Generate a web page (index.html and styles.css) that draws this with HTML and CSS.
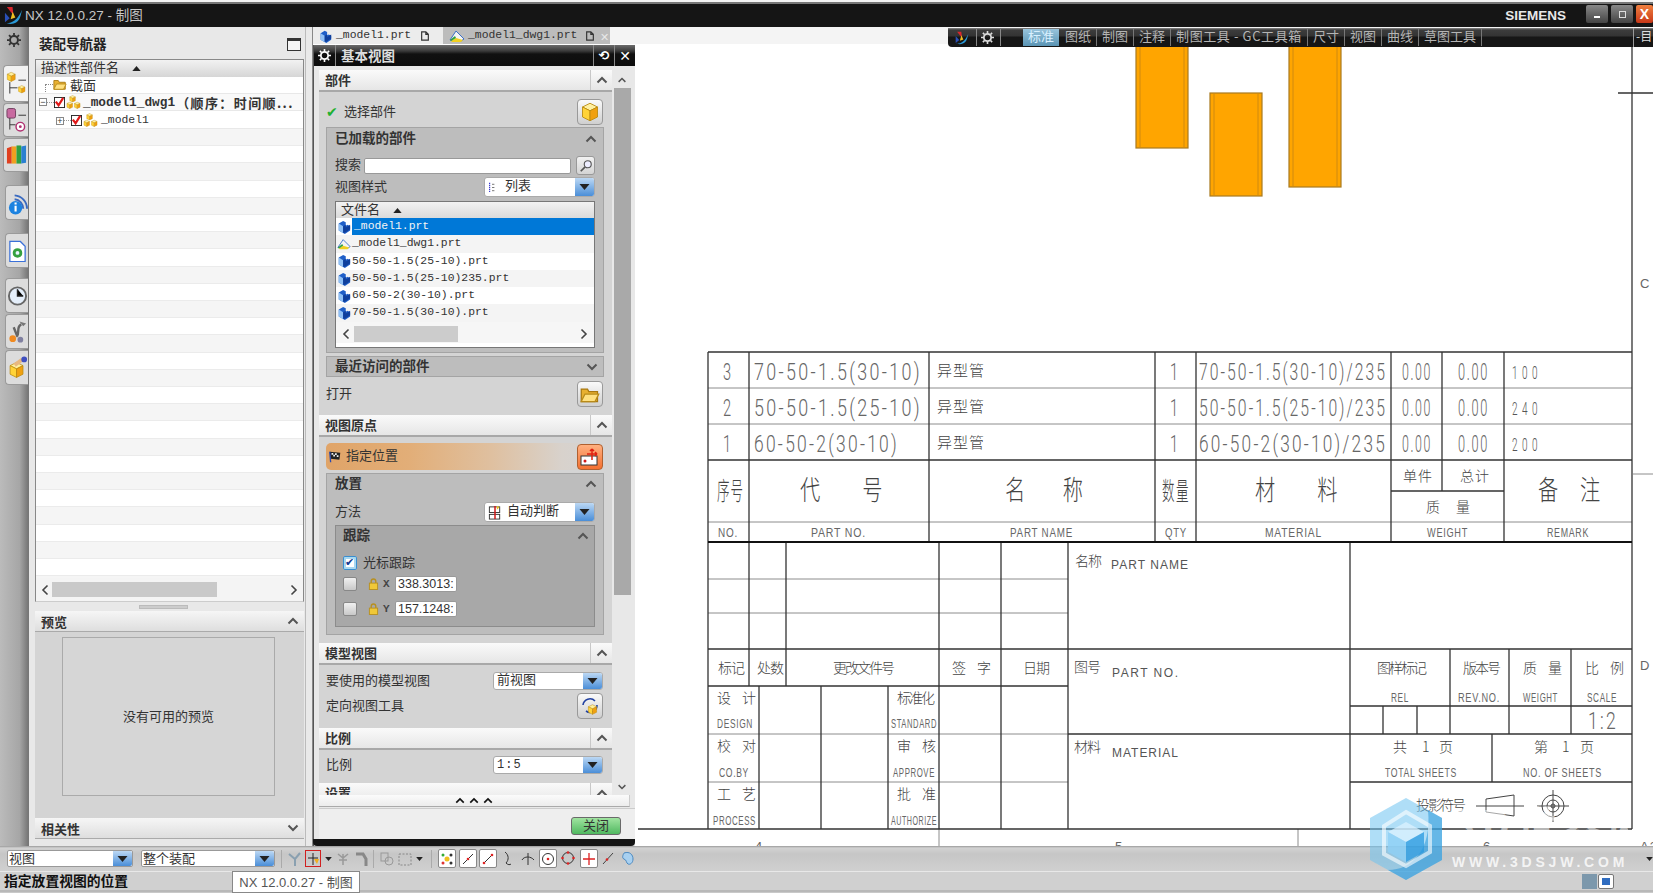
FILE: index.html
```html
<!DOCTYPE html>
<html lang="zh-CN">
<head>
<meta charset="utf-8">
<title>NX 12.0.0.27 - 制图</title>
<link rel="stylesheet" href="styles.css">
</head>
<body>
<svg class="defs" width="0" height="0" aria-hidden="true">
  <symbol id="part" viewBox="0 0 16 16"><path fill="#1f5fc8" d="M2 4l5-3 3 1.500v4l2-1 3 1.500v5l-6 4-7-4z"/><path fill="#8fc0f5" d="M2 4l5 3v8l-5-3z"/><path fill="#0f3f9c" d="M7 7l3-1.500v3l5-3v5l-6 4H7z"/></symbol>
  <symbol id="cube" viewBox="0 0 16 16"><path fill="#fff0a0" stroke="#b98a10" stroke-width=".7" d="M8 1l6 3-6 3-6-3z"/><path fill="#ffd338" stroke="#b98a10" stroke-width=".7" d="M2 4l6 3v8l-6-3z"/><path fill="#f0a010" stroke="#b98a10" stroke-width=".7" d="M14 4l-6 3v8l6-3z"/></symbol>
  <symbol id="asm" viewBox="0 0 16 16"><use href="#cube" x="3" y="0" width="8" height="8"/><use href="#cube" x="0" y="7" width="8" height="8"/><use href="#cube" x="8" y="7" width="8" height="8"/></symbol>
  <symbol id="folder" viewBox="0 0 16 14"><path fill="#e8b030" stroke="#a87810" d="M1 3h5l1 2h7v8H1z"/><path fill="#ffe080" stroke="#b88a18" d="M1 13l3-6h11l-3 6z"/></symbol>
  <symbol id="chk" viewBox="0 0 12 12"><rect x=".5" y=".5" width="11" height="11" fill="#fff" stroke="#222"/><path fill="none" stroke="#e01818" stroke-width="2.400" d="M2 5l3 4 5-8"/></symbol>
  <symbol id="up" viewBox="0 0 12 8"><path fill="none" stroke="currentColor" stroke-width="2" d="M1.500 6.500L6 2l4.500 4.500"/></symbol>
  <symbol id="down" viewBox="0 0 12 8"><path fill="none" stroke="currentColor" stroke-width="2" d="M1.500 1.500L6 6l4.500-4.500"/></symbol>
  <symbol id="tri" viewBox="0 0 10 6"><path fill="#222" d="M5 0l5 6H0z"/></symbol>
  <symbol id="left" viewBox="0 0 8 12"><path fill="none" stroke="#444" stroke-width="1.600" d="M6.500 1.500L2 6l4.500 4.500"/></symbol>
  <symbol id="right" viewBox="0 0 8 12"><path fill="none" stroke="#444" stroke-width="1.600" d="M1.500 1.500L6 6l-4.500 4.500"/></symbol>
  <symbol id="gear" viewBox="0 0 16 16"><circle cx="8" cy="8" r="4.500" fill="none" stroke="currentColor" stroke-width="2.200"/><path stroke="currentColor" stroke-width="2" d="M8 0v3M8 13v3M0 8h3M13 8h3M2.300 2.300l2 2M11.700 11.700l2 2M13.700 2.300l-2 2M4.300 11.700l-2 2"/></symbol>
  <symbol id="draw" viewBox="0 0 16 16"><path fill="#f4f4f4" stroke="#3a6fc8" d="M1 12l6-9 8 8-3 2z"/><path fill="#f0d020" d="M2 13l5-3 7 2-2 2H3z"/><path fill="#30a040" d="M1 12l5-4 1 2-5 3z"/></symbol>
  <symbol id="doc" viewBox="0 0 12 12"><path fill="none" stroke="#333" stroke-width="1.400" d="M2 1h5l3 3v7H2zM7 1v3h3"/></symbol>
  <symbol id="logo" viewBox="0 0 20 20"><path fill="#d8262c" d="M3 1l6 0 1 9z"/><path fill="#f0c020" d="M9 6l3 6-5 2z"/><path fill="#2a9ad8" d="M1 18c6 1 13-2 18-14-2 8-2 14-12 15z"/><path fill="#2a50b8" d="M1 7l5 6-5 4z"/></symbol>
  <symbol id="flag" viewBox="0 0 16 14"><path fill="#222" d="M2 1l12 1-1 8-10-1z"/><path fill="#eee" d="M4 2.500h2v2H4zM8 2.800h2v2H8zM6 4.500h2v2H6zM10 5h2v2h-2z"/><path stroke="#2a4ab0" stroke-width="1.500" d="M2 1l1 12"/></symbol>
  <symbol id="lock" viewBox="0 0 12 14"><path fill="none" stroke="#b89020" stroke-width="1.500" d="M3.500 6V4a2.500 2.500 0 015 0v2"/><rect x="1.500" y="6" width="9" height="7" fill="#f0c838" stroke="#b89020"/></symbol>
  <symbol id="mag" viewBox="0 0 16 16"><circle cx="10" cy="6" r="4" fill="#eef" stroke="#555" stroke-width="1.300"/><path stroke="#555" stroke-width="2" d="M7 9l-5 5"/></symbol>
  <symbol id="listi" viewBox="0 0 10 14"><path stroke="#3a3ad0" stroke-width="1.500" stroke-dasharray="1.500 1" d="M2 1v12"/><path stroke="#555" d="M5 3h3M5 7h3M5 11h3"/></symbol>
  <symbol id="auto" viewBox="0 0 14 16"><rect x="1" y="2" width="11" height="6" fill="#fff" stroke="#333"/><rect x="1" y="10" width="11" height="5" fill="#fff" stroke="#333"/><path stroke="#d01818" stroke-width="1.600" d="M7 1v14"/><path fill="#e8c020" d="M9 1l3 1-3 3z"/></symbol>
</svg>

<div class="app">
  <header class="titlebar">
    <svg class="logo"><use href="#logo"/></svg>
    <span class="app-name">NX 12.0.0.27 - 制图</span>
    <span class="brand">SIEMENS</span>
    <div class="winbtns">
      <span class="winbtn"><i class="glyph-min"></i></span>
      <span class="winbtn"><i class="glyph-max"></i></span>
      <span class="winbtn winclose">X</span>
    </div>
  </header>

  <div class="workspace">
    <aside class="rail">
      <svg class="rail-gear"><use href="#gear"/></svg>
      <div class="rail-group rail-first">
        <div class="rtab rtab-on"><svg class="ri" viewBox="0 0 22 26"><use href="#cube" x="0" y="0" width="11" height="11"/><use href="#cube" x="12" y="14" width="9" height="9"/><path fill="none" stroke="#333" d="M4 11v12M4 17h8M13 9h8"/></svg></div>
        <div class="rtab"><svg class="ri" viewBox="0 0 22 26"><rect x="1" y="1" width="9" height="10" rx="2" fill="#c86aa0" stroke="#704060"/><circle cx="15" cy="20" r="4.500" fill="#fff" stroke="#b03070" stroke-width="1.500"/><circle cx="15" cy="20" r="1.500" fill="#b03070"/><path fill="none" stroke="#333" d="M4 11v12M4 18h6M13 8h8"/></svg></div>
        <div class="rtab"><svg class="ri" viewBox="0 0 22 26"><path fill="#e04020" d="M1 6l5-2v18H1z"/><path fill="#f0a020" d="M6 4h5v18H6z"/><path fill="#30a040" d="M11 3h5v19h-5z"/><path fill="#2a80d0" d="M16 4l5-1v18l-5 1z"/></svg></div>
      </div>
      <div class="rail-group">
        <div class="rtab"><svg class="ri" viewBox="0 0 22 26"><path fill="none" stroke="#3a6ac0" stroke-width="2" d="M8 5a14 14 0 0113 14M8 9a10 10 0 019 10"/><circle cx="9" cy="18" r="7" fill="#1c82e0"/><path stroke="#fff" stroke-width="2.200" d="M9 16v6M9 12.500v2"/></svg></div>
      </div>
      <div class="rail-group">
        <div class="rtab"><svg class="ri" viewBox="0 0 22 26"><path fill="#fff" stroke="#3a70d8" stroke-width="1.300" d="M3 3h11l5 5v16H3z"/><circle cx="11" cy="15" r="5" fill="#35a040"/><circle cx="11" cy="15" r="2" fill="#eaf4ff"/></svg></div>
      </div>
      <div class="rail-group rail-last">
        <div class="rtab"><svg class="ri" viewBox="0 0 22 26"><circle cx="11" cy="13" r="9" fill="#e4eefa" stroke="#666" stroke-width="2"/><path stroke="#222" stroke-width="1.500" d="M11 6v7h6"/></svg></div>
        <div class="rtab"><svg class="ri" viewBox="0 0 22 26"><path fill="none" stroke="#666" stroke-width="2.500" d="M15 5c-6 3-1 9-5 13M7 8l4 10"/><path fill="#777" d="M13 2l7 2-3 3z"/><circle cx="6" cy="20" r="3.500" fill="#f08a20"/><circle cx="14" cy="21" r="3" fill="#8080a0"/></svg></div>
        <div class="rtab"><svg class="ri" viewBox="0 0 22 26"><use href="#cube" x="1" y="6" width="18" height="18"/><path stroke="#e8b880" stroke-width="4" d="M8 10l8-6"/><circle cx="18" cy="4" r="3" fill="#4050c0"/></svg></div>
      </div>
    </aside>

    <section class="nav">
      <div class="nav-title"><strong>装配导航器</strong><span class="maxbox"></span></div>
      <div class="tree">
        <div class="tree-head"><span class="lbl">描述性部件名</span><svg class="sort"><use href="#tri"/></svg></div>
        <div class="tree-row tree-sec"><i class="twig"></i><svg class="i14"><use href="#folder"/></svg><span class="cn">截面</span></div>
        <div class="tree-row tree-root"><i class="exp">−</i><i class="twig-s"></i><svg class="i11"><use href="#chk"/></svg><svg class="i15"><use href="#asm"/></svg><b class="mono-b">_model1_dwg1</b><b class="cn-b">（顺序：时间顺...</b></div>
        <div class="tree-row tree-sub"><i class="exp">+</i><i class="twig-s"></i><svg class="i11"><use href="#chk"/></svg><svg class="i15"><use href="#asm"/></svg><span class="mono">_model1</span></div>
        <div class="tree-fill"></div>
        <div class="hscroll"><svg class="sarrow"><use href="#left"/></svg><i class="hthumb"></i><svg class="sarrow sarrow-end"><use href="#right"/></svg></div>
      </div>
      <div class="sash"><i></i></div>
      <div class="nav-sec">预览<svg class="chev"><use href="#up"/></svg></div>
      <div class="preview"><div class="preview-box">没有可用的预览</div></div>
      <div class="nav-sec">相关性<svg class="chev"><use href="#down"/></svg></div>
    </section>
    <div class="splitter"></div>

    <div class="right">
      <div class="top-row">
        <div class="doc-tab"><svg class="i13"><use href="#part"/></svg><span class="mono">_model1.prt</span><svg class="i10"><use href="#doc"/></svg></div>
        <div class="doc-tab doc-tab-on"><svg class="i16"><use href="#draw"/></svg><span class="mono">_model1_dwg1.prt</span><svg class="i10"><use href="#doc"/></svg><span class="tab-x">✕</span></div>
        <div class="top-fill"></div>
        <nav class="ribbon">
          <svg class="ribbon-logo"><use href="#logo"/></svg>
          <span class="ribbon-sep"></span>
          <svg class="ribbon-gear"><use href="#gear"/></svg>
          <span class="ribbon-sep ribbon-sep-g"></span>
          <span class="rb rb-on">标准</span><span class="rb">图纸</span><span class="rb">制图</span><span class="rb">注释</span><span class="rb rb-wide">制图工具 - GC工具箱</span><span class="rb">尺寸</span><span class="rb">视图</span><span class="rb">曲线</span><span class="rb">草图工具</span>
          <span class="rb-menu">-目</span>
        </nav>
      </div>

      <div class="stage">
        <div class="dialog">
          <div class="dlg-title">
            <svg class="dlg-gear"><use href="#gear"/></svg>
            <span class="dlg-name">基本视图</span>
            <span class="dlg-act">⟲</span>
            <span class="dlg-act dlg-x">✕</span>
          </div>
          <div class="dlg-main">
            <div class="dlg-scrollarea">
              <div class="sec-head"><span>部件</span><span class="sec-chev"><svg class="chev"><use href="#up"/></svg></span></div>
              <div class="sec-body sb-part">
                <div class="row-pick">
                  <span class="okmark">✔</span><span class="lbl">选择部件</span>
                  <span class="ibtn"><svg class="i20"><use href="#cube"/></svg></span>
                </div>
                <div class="group grp-loaded">
                  <div class="grp-head"><strong>已加载的部件</strong><svg class="chev"><use href="#up"/></svg></div>
                  <div class="row-search"><span class="lb-search lbl">搜索</span><span class="input input-search"></span><span class="sbtn"><svg class="i14"><use href="#mag"/></svg></span></div>
                  <div class="row-combo"><span class="lbl">视图样式</span>
                    <span class="combo combo-s"><svg class="i-list"><use href="#listi"/></svg><span class="combo-t">列表</span><i class="combo-btn"><svg class="ctri"><use href="#tri"/></svg></i></span>
                  </div>
                  <div class="list">
                    <div class="list-head"><span class="lbl">文件名</span><svg class="sort"><use href="#tri"/></svg></div>
                    <div class="list-row"><svg class="i14"><use href="#part"/></svg><span class="mono mono-sel">_model1.prt</span></div>
                    <div class="list-row"><svg class="i14"><use href="#draw"/></svg><span class="mono">_model1_dwg1.prt</span></div>
                    <div class="list-row"><svg class="i14"><use href="#part"/></svg><span class="mono">50-50-1.5(25-10).prt</span></div>
                    <div class="list-row"><svg class="i14"><use href="#part"/></svg><span class="mono">50-50-1.5(25-10)235.prt</span></div>
                    <div class="list-row"><svg class="i14"><use href="#part"/></svg><span class="mono">60-50-2(30-10).prt</span></div>
                    <div class="list-row"><svg class="i14"><use href="#part"/></svg><span class="mono">70-50-1.5(30-10).prt</span></div>
                    <div class="list-scroll"><svg class="sarrow"><use href="#left"/></svg><i class="lthumb"></i><svg class="sarrow sarrow-end"><use href="#right"/></svg></div>
                  </div>
                </div>
                <div class="group grp-recent"><strong>最近访问的部件</strong><svg class="chev"><use href="#down"/></svg></div>
                <div class="row-open"><span class="lbl">打开</span><span class="ibtn"><svg class="i20"><use href="#folder"/></svg></span></div>
              </div>

              <div class="sec-head"><span>视图原点</span><span class="sec-chev"><svg class="chev"><use href="#up"/></svg></span></div>
              <div class="sec-body sb-origin">
                <div class="row-loc"><svg class="i14"><use href="#flag"/></svg><span class="lbl">指定位置</span>
                  <span class="ibtn ibtn-o"><svg class="i20" viewBox="0 0 20 20"><rect x="1" y="9" width="16" height="9" fill="#fff" stroke="#333"/><circle cx="5" cy="14" r="1.500" fill="#d01818"/><path fill="none" stroke="#e02010" stroke-width="1.500" d="M12 2v11M7 7h10M12 2l-2 2M12 2l2 2M17 7l-2-2M17 7l-2 2"/></svg></span>
                </div>
                <div class="group grp-place">
                  <div class="grp-head grp-head-s"><strong>放置</strong><svg class="chev"><use href="#up"/></svg></div>
                  <div class="row-combo row-method"><span class="lbl">方法</span>
                    <span class="combo combo-s"><svg class="i-auto"><use href="#auto"/></svg><span class="combo-t">自动判断</span><i class="combo-btn"><svg class="ctri"><use href="#tri"/></svg></i></span>
                  </div>
                  <div class="grp-track">
                    <div class="grp-head grp-head-s grp-head-t"><strong>跟踪</strong><svg class="chev"><use href="#up"/></svg></div>
                    <div class="track-row tr-cursor"><span class="cb cb-on"></span><span class="lbl">光标跟踪</span></div>
                    <div class="track-row tr-x"><span class="cb"></span><svg class="i-lock"><use href="#lock"/></svg><b class="axis">X</b><span class="coord">338.3013:</span></div>
                    <div class="track-row tr-y"><span class="cb"></span><svg class="i-lock"><use href="#lock"/></svg><b class="axis">Y</b><span class="coord">157.1248:</span></div>
                  </div>
                </div>
              </div>

              <div class="sec-head"><span>模型视图</span><span class="sec-chev"><svg class="chev"><use href="#up"/></svg></span></div>
              <div class="sec-body sb-model">
                <div class="row-wide"><span class="lbl">要使用的模型视图</span>
                  <span class="combo combo-w"><span class="combo-t">前视图</span><i class="combo-btn"><svg class="ctri"><use href="#tri"/></svg></i></span>
                </div>
                <div class="row-orient"><span class="lbl">定向视图工具</span>
                  <span class="ibtn"><svg class="i20" viewBox="0 0 20 20"><path fill="none" stroke="#2040a0" stroke-width="1.600" d="M3 9a7 7 0 0112-4M17 9a7 7 0 01-11 6"/><use href="#cube" x="7" y="8" width="11" height="11"/></svg></span>
                </div>
              </div>

              <div class="sec-head"><span>比例</span><span class="sec-chev"><svg class="chev"><use href="#up"/></svg></span></div>
              <div class="sec-body sb-scale">
                <div class="row-wide"><span class="lbl">比例</span>
                  <span class="combo combo-w"><span class="combo-t mono-l">1:5</span><i class="combo-btn"><svg class="ctri"><use href="#tri"/></svg></i></span>
                </div>
              </div>

              <div class="sec-head sec-cut"><span>设置</span><span class="sec-chev"><svg class="chev"><use href="#up"/></svg></span></div>
            </div>
            <div class="dlg-vscroll">
              <svg class="vs-up"><use href="#up"/></svg>
              <i class="vs-thumb"></i>
              <svg class="vs-down"><use href="#down"/></svg>
            </div>
          </div>
          <div class="more-bar"><svg class="chev-b"><use href="#up"/></svg><svg class="chev-b"><use href="#up"/></svg><svg class="chev-b"><use href="#up"/></svg></div>
          <div class="dlg-foot"><span class="btn-close"><span class="lbl">关闭</span></span></div>
          <div class="dlg-bottom"></div>
        </div>

        <svg class="sheet" viewBox="638 44 1015 802" width="1015" height="802">
          <g class="solid">
            <rect x="1136" y="40" width="52" height="108"/>
            <rect x="1210" y="93" width="52" height="103"/>
            <rect x="1289" y="40" width="52" height="147"/>
          </g>
          <path class="inner" d="M1140 44V148M1184 44V148M1214 93V196M1258 93V196M1293 44V187M1337 44V187"/>

          <path class="thin" d="M708 388H1632M708 424H1632M708 522H1632M708 579H1068M708 613H1068M708 734H1068M708 782H1068M939 829V846M1298 829V846M1633 474H1653"/>
          <path class="thick" d="M708 352H1632M708 352V829M749 352V542M929 352V542M1155 352V542M1196 352V542M1391 352V542M1442 352V491M1504 352V542M1632 44V829M708 460H1632M1391 491H1504M749 542V686M786 542V686M939 542V686M1001 542V829M1068 542V829M1350 542V829M708 649H1632M708 686H1068M1068 734H1632M1350 706H1632M1350 782H1632M759 686V829M821 686V829M888 686V829M939 686V829M1450 649V734M1509 649V734M1571 649V734M1383 706V734M1417 706V734M1492 734V782M638 829H1632M1618 93H1653"/>
          <path class="heavy" d="M708 542H1632"/>

          <g class="val">
            <text x="723" y="380" textLength="10" lengthAdjust="spacingAndGlyphs">3</text>
            <text x="723" y="416" textLength="10" lengthAdjust="spacingAndGlyphs">2</text>
            <text x="723" y="452" textLength="10" lengthAdjust="spacingAndGlyphs">1</text>
            <text x="754" y="380" textLength="168" lengthAdjust="spacingAndGlyphs">70-50-1.5(30-10)</text>
            <text x="754" y="416" textLength="168" lengthAdjust="spacingAndGlyphs">50-50-1.5(25-10)</text>
            <text x="754" y="452" textLength="145" lengthAdjust="spacingAndGlyphs">60-50-2(30-10)</text>
            <text x="1170" y="380" textLength="10" lengthAdjust="spacingAndGlyphs">1</text>
            <text x="1170" y="416" textLength="10" lengthAdjust="spacingAndGlyphs">1</text>
            <text x="1170" y="452" textLength="10" lengthAdjust="spacingAndGlyphs">1</text>
            <text x="1199" y="380" textLength="188" lengthAdjust="spacingAndGlyphs">70-50-1.5(30-10)/235</text>
            <text x="1199" y="416" textLength="188" lengthAdjust="spacingAndGlyphs">50-50-1.5(25-10)/235</text>
            <text x="1199" y="452" textLength="188" lengthAdjust="spacingAndGlyphs">60-50-2(30-10)/235</text>
            <text x="1402" y="380" textLength="30" lengthAdjust="spacingAndGlyphs">0.00</text>
            <text x="1402" y="416" textLength="30" lengthAdjust="spacingAndGlyphs">0.00</text>
            <text x="1402" y="452" textLength="30" lengthAdjust="spacingAndGlyphs">0.00</text>
            <text x="1458" y="380" textLength="31" lengthAdjust="spacingAndGlyphs">0.00</text>
            <text x="1458" y="416" textLength="31" lengthAdjust="spacingAndGlyphs">0.00</text>
            <text x="1458" y="452" textLength="31" lengthAdjust="spacingAndGlyphs">0.00</text>
            <text x="1588" y="729" textLength="30" lengthAdjust="spacingAndGlyphs">1:2</text>
          </g>
          <g class="rem">
            <text x="1512" y="379" textLength="30" lengthAdjust="spacingAndGlyphs">100</text>
            <text x="1512" y="415" textLength="30" lengthAdjust="spacingAndGlyphs">240</text>
            <text x="1512" y="451" textLength="30" lengthAdjust="spacingAndGlyphs">200</text>
          </g>
          <g class="cn14">
            <text x="937 953 969" y="376">异型管</text>
            <text x="937 953 969" y="412">异型管</text>
            <text x="937 953 969" y="448">异型管</text>
          </g>
          <g class="cn24">
            <text class="tall" transform="translate(717 500) scale(.5 1)" x="0 27">序号</text>
            <text transform="translate(800 500) scale(.75 1)" x="0 83">代号</text>
            <text transform="translate(1005 500) scale(.75 1)" x="0 77">名称</text>
            <text class="tall" transform="translate(1162 500) scale(.5 1)" x="0 28">数量</text>
            <text transform="translate(1255 500) scale(.75 1)" x="0 83">材料</text>
            <text transform="translate(1538 500) scale(.75 1)" x="0 56">备注</text>
          </g>
          <g class="cn16">
            <text x="1403 1418" y="481">单件</text>
            <text x="1460 1475" y="481">总计</text>
            <text x="1426 1456" y="512">质量</text>
            <text x="718 731" y="673">标记</text>
            <text x="757 770" y="673">处数</text>
            <text x="833 845 857 869 881" y="673">更改文件号</text>
            <text x="952 977" y="673">签字</text>
            <text x="1023 1036" y="673">日期</text>
            <text x="1074 1087" y="672">图号</text>
            <text x="1075 1088" y="566">名称</text>
            <text x="1074 1087" y="752">材料</text>
            <text x="717 742" y="703">设计</text>
            <text x="717 742" y="751">校对</text>
            <text x="717 742" y="799">工艺</text>
            <text x="897 909 921" y="703">标准化</text>
            <text x="897 922" y="751">审核</text>
            <text x="897 922" y="799">批准</text>
            <text x="1377 1389 1401 1413" y="673">图样标记</text>
            <text x="1463 1475 1487" y="673">版本号</text>
            <text x="1523 1548" y="673">质量</text>
            <text x="1585 1610" y="673">比例</text>
            <text x="1393 1422 1439" y="752">共1页</text>
            <text x="1534 1562 1580" y="752">第1页</text>
            <text x="1416 1428 1440 1452" y="810">投影符号</text>
          </g>
          <g class="lab">
            <text x="718" y="537" textLength="20" lengthAdjust="spacingAndGlyphs">NO.</text>
            <text x="811" y="537" textLength="55" lengthAdjust="spacingAndGlyphs">PART NO.</text>
            <text x="1010" y="537" textLength="63" lengthAdjust="spacingAndGlyphs">PART NAME</text>
            <text x="1165" y="537" textLength="22" lengthAdjust="spacingAndGlyphs">QTY</text>
            <text x="1265" y="537" textLength="57" lengthAdjust="spacingAndGlyphs">MATERIAL</text>
            <text x="1427" y="537" textLength="41" lengthAdjust="spacingAndGlyphs">WEIGHT</text>
            <text x="1547" y="537" textLength="42" lengthAdjust="spacingAndGlyphs">REMARK</text>
            <text x="1111" y="569" textLength="77" lengthAdjust="spacing" class="lab-w">PART NAME</text>
            <text x="1112" y="677" textLength="66" lengthAdjust="spacing" class="lab-w">PART NO.</text>
            <text x="1112" y="757" textLength="66" lengthAdjust="spacing" class="lab-w">MATERIAL</text>
            <text x="717" y="728" textLength="36" lengthAdjust="spacingAndGlyphs">DESIGN</text>
            <text x="719" y="777" textLength="30" lengthAdjust="spacingAndGlyphs">CO.BY</text>
            <text x="713" y="825" textLength="43" lengthAdjust="spacingAndGlyphs">PROCESS</text>
            <text x="891" y="728" textLength="46" lengthAdjust="spacingAndGlyphs">STANDARD</text>
            <text x="893" y="777" textLength="42" lengthAdjust="spacingAndGlyphs">APPROVE</text>
            <text x="891" y="825" textLength="46" lengthAdjust="spacingAndGlyphs">AUTHORIZE</text>
            <text x="1391" y="702" textLength="18" lengthAdjust="spacingAndGlyphs">REL</text>
            <text x="1458" y="702" textLength="42" lengthAdjust="spacingAndGlyphs">REV.NO.</text>
            <text x="1523" y="702" textLength="35" lengthAdjust="spacingAndGlyphs">WEIGHT</text>
            <text x="1587" y="702" textLength="30" lengthAdjust="spacingAndGlyphs">SCALE</text>
            <text x="1385" y="777" textLength="72" lengthAdjust="spacingAndGlyphs">TOTAL SHEETS</text>
            <text x="1523" y="777" textLength="79" lengthAdjust="spacingAndGlyphs">NO. OF SHEETS</text>
            <text x="1640" y="288">C</text>
            <text x="1640" y="670">D</text>
            <text x="755" y="851">4</text>
            <text x="1115" y="851">5</text>
            <text x="1483" y="851">6</text>
            <text x="1640" y="851">A3</text>
          </g>
          <g class="sym">
            <path d="M1476 806H1524M1486 799L1514 795V816L1486 812Z"/>
            <circle cx="1553" cy="806" r="11"/><circle cx="1553" cy="806" r="6"/><circle cx="1553" cy="806" r="2"/>
            <path d="M1537 806H1569M1553 790V822"/>
          </g>
        </svg>
      </div>
    </div>
  </div>

  <div class="toolbar">
    <span class="combo combo-t1"><span class="combo-t">视图</span><i class="combo-btn"><svg class="ctri"><use href="#tri"/></svg></i></span>
    <span class="combo combo-t2"><span class="combo-t">整个装配</span><i class="combo-btn"><svg class="ctri"><use href="#tri"/></svg></i></span>
    <span class="tb-sep tb-first"></span>
    <svg class="tbi"><path stroke="#8aa0b0" stroke-width="2" fill="none" d="M2 3l6 5 5-6M8 8v7"/></svg>
    <span class="tb-red"><svg class="tbi-s"><path stroke="#222" fill="none" d="M7 1v12M2 6h10"/><path fill="#f0b020" d="M8 7h5l-2 5z"/></svg></span>
    <svg class="tb-tri"><use href="#tri"/></svg>
    <svg class="tbi"><path stroke="#999" stroke-width="1.500" fill="none" d="M3 3l5 4 5-4M8 3v11M4 9h8"/></svg>
    <svg class="tbi"><path stroke="#888" stroke-width="3" fill="none" d="M3 3h7l3 5v7"/></svg>
    <span class="tb-sep"></span>
    <svg class="tbi"><rect x="2" y="2" width="7" height="8" fill="none" stroke="#999"/><circle cx="10" cy="10" r="4" fill="none" stroke="#999"/></svg>
    <svg class="tbi"><rect x="2" y="3" width="12" height="11" fill="none" stroke="#888" stroke-dasharray="2 1.500"/></svg>
    <svg class="tb-tri"><use href="#tri"/></svg>
    <span class="tb-sep tb-sep-b"></span>
    <span class="tb-box"><svg class="tbi-s"><circle cx="3" cy="3" r="1.500" fill="#3a3"/><circle cx="11" cy="3" r="1.500" fill="#333"/><circle cx="3" cy="11" r="1.500" fill="#d33"/><circle cx="11" cy="11" r="1.500" fill="#333"/><circle cx="7" cy="7" r="2.500" fill="#f0c020"/></svg></span>
    <span class="tb-box"><svg class="tbi-s"><path stroke="#333" d="M2 12L12 2"/><circle cx="7" cy="7" r="1.300" fill="#d22"/></svg></span>
    <span class="tb-box"><svg class="tbi-s"><path stroke="#333" d="M2 12L12 2"/><circle cx="3" cy="11" r="1.300" fill="#d22"/><circle cx="11" cy="3" r="1.300" fill="#d22"/></svg></span>
    <svg class="tb-plain"><path stroke="#333" fill="none" d="M4 1c4 3 4 8 1 11 2 2 4 2 5 1"/></svg>
    <svg class="tb-plain"><path stroke="#333" fill="none" d="M7 2v12M1 9c2-4 9-4 12 0"/></svg>
    <span class="tb-box"><svg class="tbi-s"><circle cx="7" cy="7" r="5.500" fill="none" stroke="#333"/><circle cx="7" cy="7" r="1.300" fill="#d22"/></svg></span>
    <svg class="tb-plain"><circle cx="7" cy="7" r="5.500" fill="none" stroke="#333"/><circle cx="7" cy="1.500" r="1.300" fill="#d22"/><circle cx="1.500" cy="7" r="1.300" fill="#d22"/><circle cx="12.500" cy="7" r="1.300" fill="#d22"/><circle cx="7" cy="12.500" r="1.300" fill="#d22"/></svg>
    <span class="tb-box"><svg class="tbi-s"><path stroke="#d22" stroke-width="1.300" d="M7 1v12M1 7h12"/></svg></span>
    <svg class="tb-plain"><path stroke="#444" d="M2 13L12 2"/><circle cx="6" cy="8.500" r="1.300" fill="#d22"/></svg>
    <svg class="tb-plain"><path fill="#a8d0f0" stroke="#4a88c0" d="M3 2c6-2 9 2 9 6s-3 6-5 5-1-4-4-5 0-6 0-6z"/></svg>
    <svg class="tb-tri tb-end"><use href="#tri"/></svg>
  </div>
  <footer class="status">
    <strong>指定放置视图的位置</strong>
    <span class="status-end"><i class="st-flag"></i><i class="st-win"><i></i></i></span>
  </footer>
  <div class="tooltip">NX 12.0.0.27 - 制图</div>
  <div class="watermark">
    <svg class="wm-hex" viewBox="0 0 72 82"><path fill="#6ec2f0" fill-opacity=".55" d="M36 0l36 20v42L36 82 0 62V20z"/><path fill="#1c8fd8" fill-opacity=".5" d="M72 20v42L36 82 18 72c24 0 44-20 40-60z"/><path fill="none" stroke="#fff" stroke-opacity=".6" stroke-width="4" d="M36 14l24 14v26L36 68 14 56V28z"/><path fill="#dff3ff" fill-opacity=".7" d="M36 24l18 10-18 10-18-10z"/><path fill="#8fd0f5" fill-opacity=".8" d="M18 34l18 10v20L18 54z"/><path fill="#2a9ae0" fill-opacity=".75" d="M54 34L36 44v20l18-10z"/></svg>
    <div class="wm-text"><span class="wm-big">3D世界网</span><span class="wm-url">WWW.3DSJW.COM</span></div>
  </div>
</div>
</body>
</html>
```
FILE: styles.css
```css
* { box-sizing: border-box; }
html, body { margin: 0; padding: 0; }
body { width: 1653px; height: 893px; overflow: hidden; background: #c9c9c9; font-family: "Noto Sans CJK SC", "Liberation Sans", sans-serif; font-size: 13px; line-height: 1; color: #333; }
i { font-style: normal; display: block; }
svg { display: block; flex: none; }
strong { font-weight: 700; }
.defs { position: absolute; }
.app { position: relative; width: 1653px; height: 893px; display: flex; flex-direction: column; overflow: hidden; }

/* shared */
.mono { font-family: "Liberation Mono", monospace; font-size: 11.4px; color: #333; white-space: pre; }
.lbl { margin-bottom: 4px; }
.i10 { width: 10px; height: 10px; }
.i11 { width: 11px; height: 11px; }
.i13 { width: 13px; height: 13px; }
.i14 { width: 14px; height: 14px; }
.i15 { width: 15px; height: 15px; }
.i16 { width: 16px; height: 16px; }
.i20 { width: 20px; height: 20px; }

/* title bar */
.titlebar { height: 27px; flex: none; display: flex; align-items: center; padding: 4px 0 0 4px; background: linear-gradient(#f4f4f4 0 2px, #777 2px 4px, #151515 4px 100%); }
.logo { width: 19px; height: 19px; }
.app-name { margin-left: 2px; font-family: "Liberation Sans", "Noto Sans CJK SC", sans-serif; font-size: 13.5px; color: #c8c8c8; }
.brand { margin-left: auto; font-family: "Liberation Sans", sans-serif; font-weight: 700; font-size: 13.500px; color: #e8e8e8; }
.winbtns { display: flex; gap: 3px; margin-left: 20px; align-self: flex-start; margin-top: 1px; }
.winbtn { width: 22px; height: 18px; background: linear-gradient(#888, #444); border-radius: 2px; display: flex; align-items: center; justify-content: center; color: #fff; }
.glyph-min { width: 6px; height: 2px; margin-top: 6px; background: #fff; }
.glyph-max { width: 7px; height: 7px; border: 1px solid #ddd; }
.winclose { width: 17px; background: linear-gradient(#f08040, #c83818); font: 700 14px "Liberation Sans", sans-serif; }

/* workspace */
.workspace { flex: none; height: 819px; display: flex; }

/* rail */
.rail { width: 28px; flex: none; background: linear-gradient(90deg, #bbb, #a6a6a6 70%, #777); padding-top: 6px; }
.rail-gear { width: 14px; height: 14px; margin-left: 7px; color: #333; }
.rail-group { display: flex; flex-direction: column; gap: 1px; margin-top: 13px; padding-left: 5px; }
.rail-first { margin-top: 18px; padding-left: 3px; }
.rail-first .rtab { height: 34px; }
.rail-first .rtab-on { height: 37px; }
.rail-last { margin-top: 10px; }
.rtab { height: 35px; background: #dcdcdc; border: 1px solid #9a9a9a; border-right: 0; border-radius: 4px 0 0 4px; display: flex; align-items: center; justify-content: center; }
.rtab-on { background: #f2f2f2; }
.ri { width: 21px; height: 26px; }

/* navigator */
.nav { width: 277px; flex: none; background: #e8e8e8; border-left: 1px solid #777; display: flex; flex-direction: column; padding-left: 6px; }
.nav-title { height: 32px; flex: none; display: flex; align-items: center; padding: 2px 4px 0 4px; font-size: 13.5px; color: #222; }
.maxbox { margin-left: auto; margin-right: 0; width: 14px; height: 13px; border: 1.500px solid #333; border-top-width: 3px; background: #f4f4f4; }
.tree { width: 269px; height: 543px; flex: none; border: 1px solid #888; border-bottom-color: #ccc; background: #fff; display: flex; flex-direction: column; }
.tree-head { height: 17px; flex: none; display: flex; align-items: center; padding-left: 5px; background: linear-gradient(#f2f2f2, #d6d6d6); font-size: 13px; color: #333; }
.sort { width: 9px; height: 5px; margin-left: 13px; }
.tree-row { height: 17.200px; flex: none; display: flex; align-items: center; border-bottom: 1px solid #e8e8e8; }
.tree-sec { padding-left: 9px; padding-bottom: 2px; }
.tree-root { padding-left: 3px; background: #f9f9f9; }
.tree-sub { padding-left: 20px; padding-top: 3px; }
.twig { width: 8px; height: 8px; border-top: 1px dotted #888; border-left: 1px dotted #888; margin-top: 8px; }
.cn { margin-left: 3px; color: #333; font-size: 13px; }
.exp { width: 8px; height: 8px; border: 1px solid #888; font: 9px/6px "Liberation Sans", sans-serif; text-align: center; color: #333; background: #fff; }
.twig-s { width: 7px; border-top: 1px dotted #999; }
.tree-row .i15 { margin-left: 1px; }
.mono-b { margin-left: 2px; font: 700 12.800px "Liberation Mono", monospace; color: #333; white-space: pre; }
.cn-b { margin-left: 1px; font-size: 13px; font-weight: 700; letter-spacing: 1.400px; color: #333; white-space: pre; }
.tree-sub .mono { margin-left: 3px; }
.tree-fill { flex: 1; background: repeating-linear-gradient(#f5f5f5 0 16.200px, #ebebeb 16.200px 17.200px, #fff 17.200px 33.400px, #ebebeb 33.400px 34.400px); }
.hscroll { height: 23px; flex: none; display: flex; align-items: center; padding: 0 5px; background: #f4f4f4; }
.sarrow { width: 8px; height: 12px; }
.sarrow-end { margin-left: auto; }
.hthumb { width: 165px; height: 15px; margin-left: 3px; background: #c9c9c9; }
.sash { height: 9px; flex: none; display: flex; justify-content: center; padding-top: 3px; padding-right: 14px; }
.sash i { width: 49px; height: 4px; background: #ccc; border: 1px solid #bbb; }
.nav-sec { width: 269px; height: 21px; flex: none; margin-left: 0; display: flex; align-items: center; justify-content: space-between; padding: 0 5px 0 6px; background: linear-gradient(#f6f6f6, #dedede); border-bottom: 1px solid #aaa; font-weight: 700; color: #333; }
.chev { width: 12px; height: 8px; color: #555; }
.preview { width: 269px; height: 186px; flex: none; background: #d4d4d4; padding: 5px 0 0 27px; }
.preview-box { width: 213px; height: 159px; border: 1px solid #aaa; background: #d6d6d6; display: flex; align-items: center; justify-content: center; padding-bottom: 2px; color: #333; }
.splitter { width: 8px; flex: none; background: #e9e9e9; border-right: 1px solid #888; border-left: 1px solid #bbb; }

/* right column */
.right { flex: 1; display: flex; flex-direction: column; min-width: 0; }
.top-row { height: 17px; flex: none; display: flex; background: #f4f4f4; }
.doc-tab { width: 130px; display: flex; align-items: center; gap: 4px; padding: 1px 0 0 6px; background: #ececec; }
.doc-tab .i10 { margin-left: 5px; }
.doc-tab-on { width: 167px; background: #bcbcbc; gap: 3px; }
.tab-x { color: #e8e8e8; font-size: 11px; margin-left: 2px; }
.top-fill { width: 338px; flex: none; }
.ribbon { position: relative; z-index: 2; flex: 1; height: 19px; margin-top: 1px; display: flex; align-items: center; background: linear-gradient(#8a8a8a 0, #3c3c3c 2px, #333 8px, #161616 9px, #161616); color: #b4b4b4; border-bottom-left-radius: 4px; padding-left: 7px; }
.ribbon-logo { width: 14px; height: 16px; }
.ribbon-sep { width: 1px; height: 17px; background: #888; margin-left: 7px; }
.ribbon-gear { width: 13px; height: 13px; margin-left: 4px; color: #ddd; }
.ribbon-sep-g { margin-left: 6px; margin-right: 22px; }
.rb { padding: 0 5px 4px; height: 17px; border-right: 1px solid #777; display: flex; align-items: center; font-size: 13px; white-space: pre; }
.rb-on { background: linear-gradient(#98c4dc, #5a94b4); color: #d8f0ff; border-right: 0; margin-right: 1px; padding: 0 5px 4px; }
.rb-wide { width: 137px; padding: 0 0 4px 5px; letter-spacing: .6px; }
.rb:last-of-type { width: 64px; }
.rb-menu { margin-left: auto; width: 20px; height: 19px; border-left: 1px solid #999; display: flex; align-items: center; padding: 0 0 3px 2px; color: #ddd; font-size: 12px; }

/* stage */
.stage { flex: 1; display: flex; background: #fff; min-height: 0; }
.dialog { width: 322px; height: 801px; margin-top: 1px; flex: none; background: #e8e8e8; border-left: 1px solid #555; display: flex; flex-direction: column; }
.dlg-title { height: 21px; flex: none; display: flex; align-items: center; background: linear-gradient(#6c6c6c 0, #3a3a3a 6px, #111 9px, #0c0c0c); color: #ddd; }
.dlg-gear { width: 13px; height: 13px; margin-left: 4px; color: #fff; }
.dlg-name { margin-left: 4px; padding-left: 5px; border-left: 1px solid #888; height: 21px; display: flex; align-items: center; font-weight: 700; font-size: 13.5px; }
.dlg-act { width: 21px; height: 21px; display: flex; align-items: center; justify-content: center; border-left: 1px solid #888; font-family: "DejaVu Sans", sans-serif; font-size: 13px; font-weight: 700; color: #fff; }
.dlg-act:nth-of-type(2) { margin-left: auto; }
.dlg-x { font-size: 14px; }
.dlg-main { height: 729px; flex: none; display: flex; padding: 4px 0 0 5px; }
.dlg-scrollarea { width: 293px; height: 725px; flex: none; overflow: hidden; }
.dlg-vscroll { width: 18px; flex: none; margin-left: 1px; display: flex; flex-direction: column; align-items: center; margin-top: -4px; color: #555; }
.vs-up { width: 10px; height: 6px; margin-top: 11px; }
.vs-thumb { width: 17px; height: 507px; margin-top: 5px; background: #a9a9a9; }
.vs-down { width: 10px; height: 6px; margin-top: 189px; }

.sec-head { height: 22px; display: flex; align-items: stretch; justify-content: space-between; background: linear-gradient(#fafafa, #e6e6e6); border-bottom: 2px solid #a8a8a8; padding-left: 6px; font-weight: 700; color: #333; }
.sec-head > span:first-child { padding-top: 3px; }
.sec-chev { width: 22px; border-left: 1px solid #c8c8c8; display: flex; align-items: center; justify-content: center; }
.sec-body { background: #d4d4d4; overflow: hidden; }
.sb-part { height: 323px; }
.sb-origin { height: 206px; padding-top: 6px; }
.sb-model { height: 63px; padding-top: 7px; }
.sb-scale { height: 33px; padding-top: 6px; }

.row-pick { height: 35px; padding: 5px 9px 0 7px; display: flex; align-items: center; }
.okmark { width: 18px; color: #20b030; font-size: 14px; font-family: "DejaVu Sans", sans-serif; }
.ibtn { margin-left: auto; width: 26px; height: 26px; flex: none; border: 1px solid #999; border-radius: 4px; background: linear-gradient(#fafafa, #cfcfcf); display: flex; align-items: center; justify-content: center; }
.ibtn-o { background: linear-gradient(#ffb080, #f47030); border-color: #b06030; }
.group { margin: 0 8px 0 7px; background: #bdbdbd; border: 1px solid #a4a4a4; }
.grp-loaded { height: 226px; padding: 0 8px; }
.grp-head { height: 22px; display: flex; align-items: center; justify-content: space-between; margin: 0 -2px 0 0; font-size: 13.5px; color: #333; }
.grp-head strong { margin-bottom: 3px; }
.grp-head-s { height: 20px; }
.row-search { display: flex; align-items: center; height: 21px; margin-top: 5px; }
.lb-search { width: 29px; }
.input { display: block; background: #fff; border: 1px solid #999; border-radius: 2px; }
.input-search { width: 208px; height: 16px; }
.sbtn { margin-left: 5px; width: 19px; height: 19px; background: linear-gradient(#f2f2f2, #d4d4d4); border: 1px solid #999; border-radius: 3px; display: flex; align-items: center; justify-content: center; }
.row-combo { display: flex; align-items: center; justify-content: space-between; height: 20px; margin-top: 1px; }
.combo { display: flex; align-items: center; background: #fff; border: 1px solid #aaa; border-radius: 3px; }
.combo-t { flex: 1; color: #333; white-space: pre; margin-bottom: 5px; }
.combo-btn { width: 19px; align-self: stretch; background: linear-gradient(#bcd8f4, #4a8ed8); border-radius: 0 2px 2px 0; display: flex; align-items: center; justify-content: center; flex: none; }
.ctri { width: 11px; height: 6px; transform: rotate(180deg); }
.combo-s { width: 111px; height: 20px; }
.combo-s .combo-t { margin-left: 9px; }
.i-list { width: 8px; height: 13px; margin-left: 3px; }
.i-auto { width: 14px; height: 15px; margin-left: 3px; }
.combo-s .i-auto + .combo-t { margin-left: 5px; }
.combo-w { width: 110px; height: 18px; }
.combo-w .combo-t { margin-left: 3px; }
.mono-l { font-family: "Liberation Mono", monospace; font-size: 12px; letter-spacing: 1px; margin-bottom: 0; }
.list { margin-top: 4px; height: 147px; background: #fff; border: 1px solid #777; }
.list-head { height: 16px; display: flex; align-items: center; padding-left: 5px; background: linear-gradient(#f2f2f2, #dadada); }
.list-row { height: 17.300px; display: flex; align-items: center; padding-left: 1px; gap: 1px; }
.list-row:nth-child(odd) { background: #f4f4f4; }
.mono-sel { background: #0078d7; color: #f4f4f4; align-self: stretch; flex: 1; display: flex; align-items: center; padding-left: 2px; }
.list-scroll { height: 21px; display: flex; align-items: center; padding: 3px 6px 0 6px; background: #f6f6f6; }
.lthumb { width: 104px; height: 16px; margin-left: 4px; background: #ccc; }
.grp-recent { height: 21px; margin-top: 3px; display: flex; align-items: center; justify-content: space-between; padding: 0 5px 0 8px; font-size: 13.5px; background: #bdbdbd; }
.grp-recent strong { margin-bottom: 2px; }
.row-open { height: 30px; display: flex; align-items: center; padding: 4px 9px 0 7px; }
.row-loc { margin: 0 9px 3px 7px; height: 27px; border-radius: 5px 0 0 5px; display: flex; align-items: center; padding-left: 2px; gap: 4px; background: linear-gradient(90deg, #e0a468, #e2ae78 30%, #dfc0a0 60%, #d8d2cc 85%, #d4d4d4); }
.row-loc .ibtn { margin-right: 0; }
.grp-place { height: 162px; padding: 0 8px; }
.row-method { margin-top: 8px; }
.grp-track { margin-top: 3px; height: 102px; background: #a8a8a8; border: 1px solid #8c8c8c; padding: 0 7px; }
.track-row { display: flex; align-items: center; }
.tr-cursor { margin-top: 10px; height: 14px; }
.tr-x { margin-top: 6px; height: 16px; }
.tr-y { margin-top: 9px; height: 16px; }
.cb { width: 14px; height: 14px; flex: none; border: 1px solid #888; border-radius: 2px; background: linear-gradient(#f0f0f0, #c8c8c8); }
.cb-on { background: #fff; border-color: #3a8ed0; margin-right: 6px; position: relative; box-shadow: inset 0 0 0 2px #a8d8f0; }
.cb-on::after { content: "✔"; position: absolute; left: 1px; top: 0; font: 11px/12px "DejaVu Sans", sans-serif; color: #123a90; }
.i-lock { width: 11px; height: 14px; margin-left: 11px; }
.axis { width: 18px; margin-left: 4px; font: 700 11px "Liberation Mono", monospace; color: #444; }
.coord { width: 62px; height: 16px; margin-left: -6px; background: #fff; border: 1px solid #999; border-radius: 2px; overflow: hidden; font-family: "Liberation Sans", sans-serif; font-size: 12.500px; line-height: 14px; padding-left: 2px; color: #333; white-space: pre; }
.row-wide { display: flex; align-items: center; justify-content: space-between; height: 18px; padding: 0 0 0 7px; margin-right: 9px; }
.row-orient { display: flex; align-items: center; height: 26px; margin-top: 3px; padding: 0 9px 0 7px; }
.more-bar { height: 12px; flex: none; margin-left: 5px; width: 311px; display: flex; justify-content: center; align-items: center; gap: 4px; background: linear-gradient(#fbfbfb, #ececec); border-bottom: 1px solid #aaa; border-right: 1px solid #ccc; padding-left: 0; color: #111; }
.chev-b { width: 10px; height: 7px; }
.dlg-foot { height: 31px; flex: none; display: flex; justify-content: flex-end; padding: 8px 14px 0 0; margin-left: 5px; border-top: 1px solid #ccc; margin-top: 1px; background: #eee; }
.btn-close { width: 50px; height: 18px; border: 1px solid #6a6a6a; border-radius: 3px; background: linear-gradient(#a0e4a0, #50b860); display: flex; align-items: center; justify-content: center; color: #333; }
.dlg-bottom { flex: 1; background: #151515; border-radius: 0 0 4px 4px; margin-left: -1px; }

/* drawing */
.sheet { margin-left: 3px; display: block; background: #fff; overflow: hidden; font-family: "Liberation Sans", sans-serif; }
.solid rect { fill: #ffa500; stroke: #a87a20; stroke-width: 1.200; }
.inner { stroke: #cf8a10; stroke-width: 1; fill: none; }
.thin { stroke: #8c8c8c; stroke-width: 1; fill: none; }
.thick { stroke: #333; stroke-width: 1.300; fill: none; }
.heavy { stroke: #111; stroke-width: 2; fill: none; }
.val text { font-family: Roboto, "Liberation Sans", sans-serif; font-weight: 300; font-size: 23px; letter-spacing: 3px; fill: #666; }
.rem text { font-family: Roboto, "Liberation Sans", sans-serif; font-weight: 300; font-size: 18px; letter-spacing: 8px; fill: #555; }
.lab text { font-size: 13px; letter-spacing: 1px; fill: #666; }
.lab .lab-w { font-size: 12px; letter-spacing: 0; fill: #555; }
.cn14 text, .cn16 text, .cn24 text { font-family: "Noto Sans CJK SC", sans-serif; font-weight: 300; fill: #444; }
.cn14 text { font-size: 15px; }
.cn16 text { font-size: 14px; }
.cn24 text { font-size: 27px; }
.cn24 .tall { font-size: 25px; }
.sym { fill: none; stroke: #444; stroke-width: 1; }

/* bottom toolbar */
.toolbar { height: 26px; flex: none; display: flex; align-items: center; padding: 0 0 0 7px; background: linear-gradient(#9a9a9a 0, #d2d2d2 2px, #c6c6c6 8px, #d0d0d0); border-bottom: 1px solid #e8e8e8; }
.combo-t1, .combo-t2 { height: 17px; border-color: #999; border-radius: 2px; }
.combo-t1 { width: 126px; }
.combo-t2 { width: 134px; margin-left: 8px; }
.combo-t1 .combo-t, .combo-t2 .combo-t { margin-left: 1px; margin-bottom: 3px; }
.tb-sep { width: 1px; height: 18px; background: #aaa; margin: 0 3px; flex: none; }
.tb-first { margin: 0 3px 0 6px; }
.tb-sep-b { margin: 0 5px 0 6px; }
.tbi { width: 16px; height: 16px; margin: 0 1px; }
.tb-sep + .tbi { margin-left: 2px; }
.tbi-s { width: 14px; height: 14px; }
.tb-red { width: 16px; height: 17px; border: 1px solid #d02020; margin: 0 2px 0 1px; display: flex; align-items: center; justify-content: center; }
.tb-tri { width: 7px; height: 4px; transform: rotate(180deg); margin: 0 2px; }
.tb-box { width: 18px; height: 19px; background: #fff; border: 1px solid #888; border-radius: 2px; display: flex; align-items: center; justify-content: center; margin: 0 1.200px; flex: none; }
.tb-plain { width: 15px; height: 15px; margin: 0 2.500px; }
.tb-end { margin-left: auto; margin-right: 0; }
.status { height: 20px; flex: none; display: flex; align-items: center; padding-left: 4px; background: #d0d0d0; border-bottom: 2px solid #b8b8b8; color: #111; font-size: 13.8px; }
.status-end { margin-left: auto; margin-right: 39px; display: flex; gap: 1px; }
.st-flag { width: 15px; height: 15px; background: #7c98ac; }
.st-win { width: 16px; height: 15px; border: 1px solid #777; background: #fff; border-radius: 2px; padding: 3px; }
.st-win i { height: 7px; background: #2f6cc0; }
.tooltip { position: absolute; left: 232px; top: 871px; width: 128px; height: 22px; background: #fff; border: 1px solid #888; display: flex; align-items: center; justify-content: center; font-family: "Liberation Sans", "Noto Sans CJK SC", sans-serif; font-size: 13px; color: #555; }
.watermark { position: absolute; left: 1370px; top: 798px; display: flex; gap: 10px; }
.wm-hex { width: 72px; height: 82px; }
.wm-text { width: 176px; display: flex; flex-direction: column; }
.wm-big { height: 50px; font-size: 40px; font-weight: 700; line-height: 50px; color: rgba(255,255,255,.55); letter-spacing: 6px; overflow: hidden; white-space: pre; }
.wm-url { margin-top: 7px; font-family: "Liberation Sans", sans-serif; font-weight: 700; font-size: 14px; letter-spacing: 3.800px; color: rgba(255,255,255,.8); white-space: pre; }
```
